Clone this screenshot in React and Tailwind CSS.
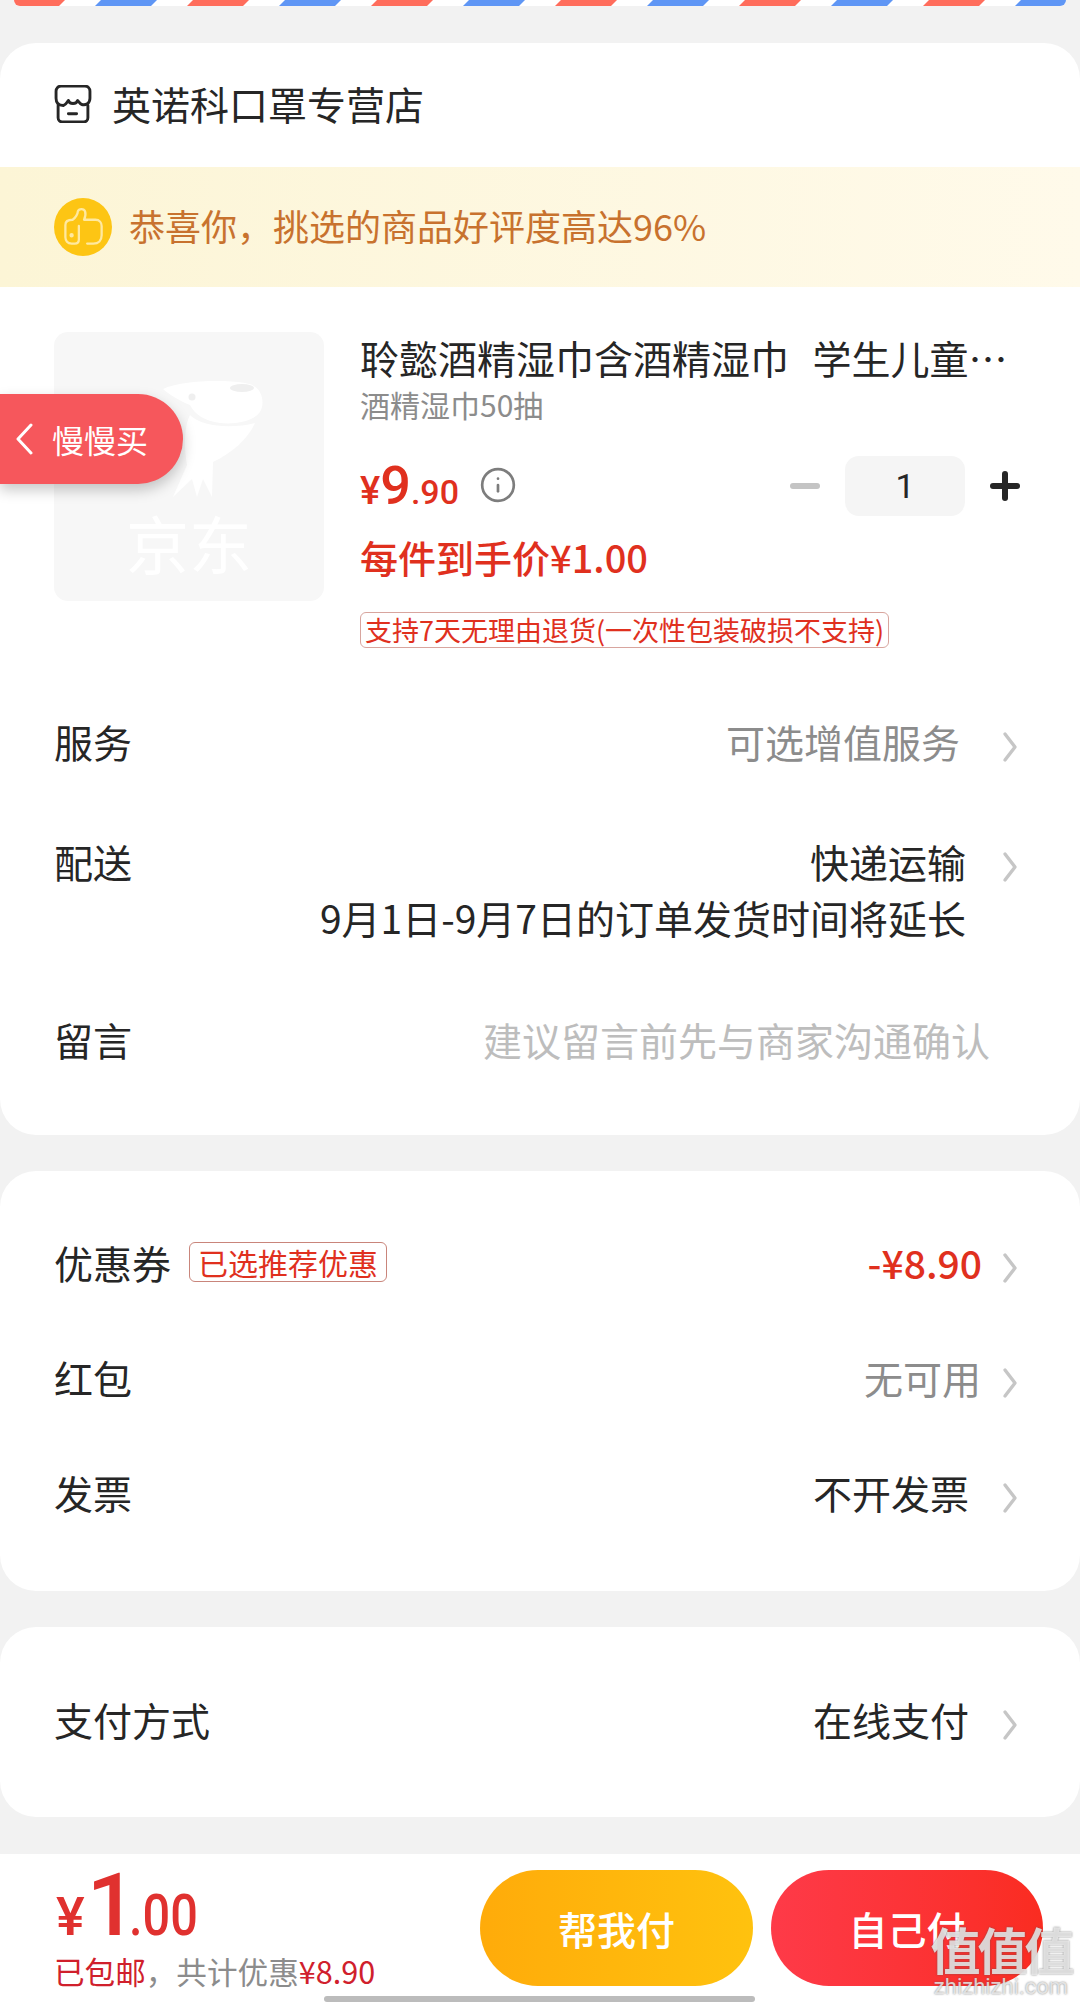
import { Info } from "lucide-react";

const cjk = { fontFamily: '"Noto Sans CJK SC", sans-serif' };
const num = { fontFamily: 'Roboto, "Noto Sans CJK SC", sans-serif' };

function Arrow() {
  return (
    <svg className="mt-[12px] h-[32px] w-[16px] shrink-0" viewBox="0 0 16 32" fill="none" stroke="#c6c6c6" strokeWidth="3.4" strokeLinecap="round" strokeLinejoin="round">
      <path d="M3 3l10 13L3 29" />
    </svg>
  );
}

function Row({ label, value, valueClass = "text-[#262626]", gapClass = "mr-[33px]", extra, className = "" }) {
  return (
    <div className={`flex items-center justify-between pl-[54px] pr-[62px] ${className}`}>
      <div className="flex items-center">
        <span className="text-[39px] leading-[50px] text-[#262626]">{label}</span>
        {extra}
      </div>
      <div className="flex items-center">
        <span className={`text-[39px] leading-[50px] ${gapClass} ${valueClass}`}>{value}</span>
        <Arrow />
      </div>
    </div>
  );
}

function Stripes() {
  const xs = [];
  for (let i = 0; i < 12; i++) xs.push(5 + 92 * i);
  return (
    <svg className="-ml-[14px] block h-[6px] w-[1080px] max-w-none" viewBox="0 0 1080 6">
      <rect width="1080" height="6" fill="#ffffff" />
      {xs.map((x, i) => (
        <polygon
          key={x}
          points={`${x + 4},0 ${x + 60},0 ${x + 54},6 ${x - 2},6`}
          fill={i % 2 === 0 ? "#ff6d5c" : "#5f96f5"}
        />
      ))}
    </svg>
  );
}

function JdDog() {
  return (
    <svg className="ml-[47px] h-[125px] w-[105px] shrink-0" viewBox="0 0 105 125" fill="#ffffff">
      <path d="M3 12C20 4 60 2 85 6c15 2 19 14 17 24-2 12-22 18-42 16C45 44 35 38 30 28 20 24 10 18 3 12z" />
      <path d="M30 38c12 12 42 14 65 8-7 16-23 30-42 39l-1 35-9-18-6 18-5-18-19 18 14-32c-3-18-3-38 3-50z" />
      <ellipse cx="82" cy="11" rx="12" ry="4" fill="#efefef" />
      <circle cx="32" cy="20" r="3.5" fill="#efefef" />
    </svg>
  );
}

export default function App() {
  return (
    <div className="relative h-[2002px] w-[1080px] overflow-hidden bg-[#f2f2f2]" style={cjk}>
      <div className="mx-[14px] overflow-hidden rounded-b-[16px]">
        <Stripes />
      </div>

      <div className="mt-[37px] rounded-[36px] bg-white pb-[2px]">
        <div className="flex h-[124px] items-center pl-[54px]">
          <svg className="mb-[2px] h-[38px] w-[38px]" viewBox="0 0 37 37" fill="none" stroke="#262626" strokeWidth="2.8" strokeLinecap="round" strokeLinejoin="round">
            <path d="M2 13V6a5 5 0 0 1 5-5h23a5 5 0 0 1 5 5v7c0 5-4 7-8 6-2-1-3-3-4-4-1 4-8 4-9 0-1 1-2 4-5 5-4 0-7-2-7-7z" />
            <path d="M4 20v12a4 4 0 0 0 4 4h21a4 4 0 0 0 4-4V20M14 28h8" />
          </svg>
          <span className="mb-[4px] ml-[20px] text-[39px] leading-[50px] text-[#262626]">英诺科口罩专营店</span>
        </div>

        <div className="flex h-[120px] items-center bg-gradient-to-r from-[#fcf5d6] to-[#fffaea] pl-[54px]">
          <div className="flex h-[58px] w-[58px] items-center justify-center rounded-full bg-[#fdc514]">
            <svg className="h-[58px] w-[58px]" viewBox="0 0 56 56" fill="none" stroke="#ffe9a0" strokeWidth="2.2" strokeLinecap="round" strokeLinejoin="round">
              <path d="M32 44h6c5 0 8-3 8-8v-9c0-3-2-6-6-6H29c1-2 2-5 1-8-1-3-6-3-7 0 0 2-2 6-5 8-4 0-7 1-7 5v12c0 3 2 6 6 6h3c2 0 4-1 4-4V27" />
              <circle cx="17" cy="36" r="1" />
            </svg>
          </div>
          <span className="mb-[4px] ml-[17px] text-[36px] leading-[46px] text-[#c8722e]">恭喜你，挑选的商品好评度高达96%</span>
        </div>

        <div className="flex pl-[54px] pr-[60px] pt-[45px]">
          <div className="flex h-[269px] w-[270px] shrink-0 flex-col items-center rounded-[14px] bg-[#f7f7f7] pt-[45px]">
            <JdDog />
            <span className="mt-[10px] text-[63px] leading-[60px] text-white">京东</span>
          </div>
          <div className="ml-[36px] min-w-0 flex-1">
            <div className="whitespace-pre text-[39px] leading-[50px] text-[#262626]">
              聆懿酒精湿巾含酒精湿巾<span className="ml-[6px]">  学生儿童…</span>
            </div>
            <div className="mt-[2px] text-[30px] leading-[40px] text-[#8c8c8c]">酒精湿巾50抽</div>
            <div className="mt-[32px] flex h-[60px] items-center justify-between">
              <div className="flex items-center">
                <span className="mt-[4px] flex items-baseline font-medium text-[#e0301e]" style={num}>
                  <span className="text-[38px]">¥</span>
                  <span className="text-[54px] leading-[60px]">9</span>
                  <span className="text-[34px]">.90</span>
                </span>
                <Info className="mb-[2px] ml-[20px] h-[38px] w-[38px] text-[#7d7d7d]" strokeWidth={1.7} />
              </div>
              <div className="flex items-center">
                <span className="h-[6px] w-[30px] rounded-full bg-[#c4c4c4]" />
                <span className="mx-[25px] flex h-[60px] w-[120px] items-center justify-center rounded-[14px] bg-[#f5f5f5] text-[34px] text-[#262626]" style={num}>1</span>
                <span className="relative h-[30px] w-[30px]">
                  <span className="absolute left-0 top-[12px] h-[6px] w-[30px] rounded-full bg-[#262626]" />
                  <span className="absolute left-[12px] top-0 h-[30px] w-[6px] rounded-full bg-[#262626]" />
                </span>
              </div>
            </div>
            <div className="mt-[17px] text-[38px] font-medium leading-[48px] text-[#e0301e]">每件到手价¥1.00</div>
            <div className="mt-[31px] inline-flex h-[36px] items-center whitespace-nowrap rounded-[6px] border border-[#d8a59e] px-[4px] text-[27px] text-[#e0301e]">支持7天无理由退货(一次性包装破损不支持)</div>
          </div>
        </div>

        <Row className="mt-[68px]" label="服务" value="可选增值服务" valueClass="text-[#8c8c8c]" gapClass="mr-[42px]" />

        <div className="mt-[70px] pl-[54px] pr-[62px]">
          <div className="flex items-center justify-between">
            <span className="text-[39px] leading-[50px] text-[#262626]">配送</span>
            <div className="flex items-center">
              <span className="mr-[36px] text-[39px] leading-[50px] text-[#262626]">快递运输</span>
              <Arrow />
            </div>
          </div>
          <div className="mt-[6px] pr-[52px] text-right text-[39px] leading-[50px] text-[#262626]">9月1日-9月7日的订单发货时间将延长</div>
        </div>

        <div className="mt-[72px] flex items-center justify-between pb-[69px] pl-[54px] pr-[90px]">
          <span className="text-[39px] leading-[50px] text-[#262626]">留言</span>
          <span className="text-[39px] leading-[50px] text-[#bdbdbd]">建议留言前先与商家沟通确认</span>
        </div>
      </div>

      <div className="mt-[36px] flex h-[420px] flex-col justify-center gap-[65px] rounded-[36px] bg-white pb-[8px]">
        <Row
          label="优惠券"
          value="-¥8.90"
          valueClass="font-medium text-[#e0301e]"
          gapClass="mr-[20px]"
          extra={
            <span className="ml-[18px] flex h-[40px] items-center rounded-[6px] border border-[#c9857b] px-[8px] text-[30px] text-[#e0301e]">已选推荐优惠</span>
          }
        />
        <Row label="红包" value="无可用" valueClass="text-[#8c8c8c]" gapClass="mr-[21px]" />
        <Row label="发票" value="不开发票" />
      </div>

      <div className="mt-[36px] flex h-[190px] flex-col justify-center rounded-[36px] bg-white pb-[6px]">
        <Row label="支付方式" value="在线支付" />
      </div>

      <div className="absolute bottom-0 left-0 flex h-[148px] w-full items-center justify-between bg-white pl-[54px] pr-[37px]">
        <div>
          <div className="flex items-baseline font-medium leading-[78px] text-[#e0312f]" style={num}>
            <span className="ml-[2px] text-[54px]">¥</span>
            <span className="ml-[2px] text-[88px]">1</span>
            <span className="-ml-[8px] origin-left scale-x-[0.84] text-[58px]">.00</span>
          </div>
          <div className="-mt-[5px] text-[30.6px] leading-[40px]">
            <span className="text-[#d0202c]">已包邮</span>
            <span className="text-[#8c8c8c]">，共计优惠</span>
            <span className="text-[#d0202c]">¥8.90</span>
          </div>
        </div>
        <div className="flex items-center gap-[18px]">
          <div className="flex h-[116px] w-[273px] items-center justify-center rounded-full bg-gradient-to-r from-[#ffab0a] to-[#ffc20e] text-[39px] font-medium text-white">帮我付</div>
          <div className="flex h-[116px] w-[272px] items-center justify-center rounded-full bg-gradient-to-r from-[#fe3a48] to-[#fa2c20] text-[39px] font-medium text-white">自己付</div>
        </div>
      </div>

      <div className="absolute bottom-0 left-[324px] h-[6px] w-[431px] rounded-full bg-[#bcbcbc]" />

      <div className="absolute left-0 top-[394px] flex h-[90px] w-[183px] items-center rounded-r-full bg-[#f6575c] pl-[15px] shadow-[0_6px_14px_rgba(0,0,0,0.22)]">
        <svg className="h-[32px] w-[18px]" viewBox="0 0 18 32" fill="none" stroke="#ffffff" strokeWidth="3" strokeLinecap="round" strokeLinejoin="round">
          <path d="M16 2L3 16l13 14" />
        </svg>
        <span className="ml-[19px] whitespace-nowrap text-[32px] text-white">慢慢买</span>
      </div>

      <div className="absolute bottom-[4px] right-[8px] flex w-[142px] flex-col items-center text-[#f4f4f4]/80 [text-shadow:0_0_2px_rgba(90,90,90,0.8)]">
        <span className="whitespace-nowrap text-[50px] font-bold leading-[56px] tracking-[-3px]">值值值</span>
        <span className="whitespace-nowrap text-[22px] leading-[22px]" style={num}>zhizhizhi.com</span>
      </div>
    </div>
  );
}
